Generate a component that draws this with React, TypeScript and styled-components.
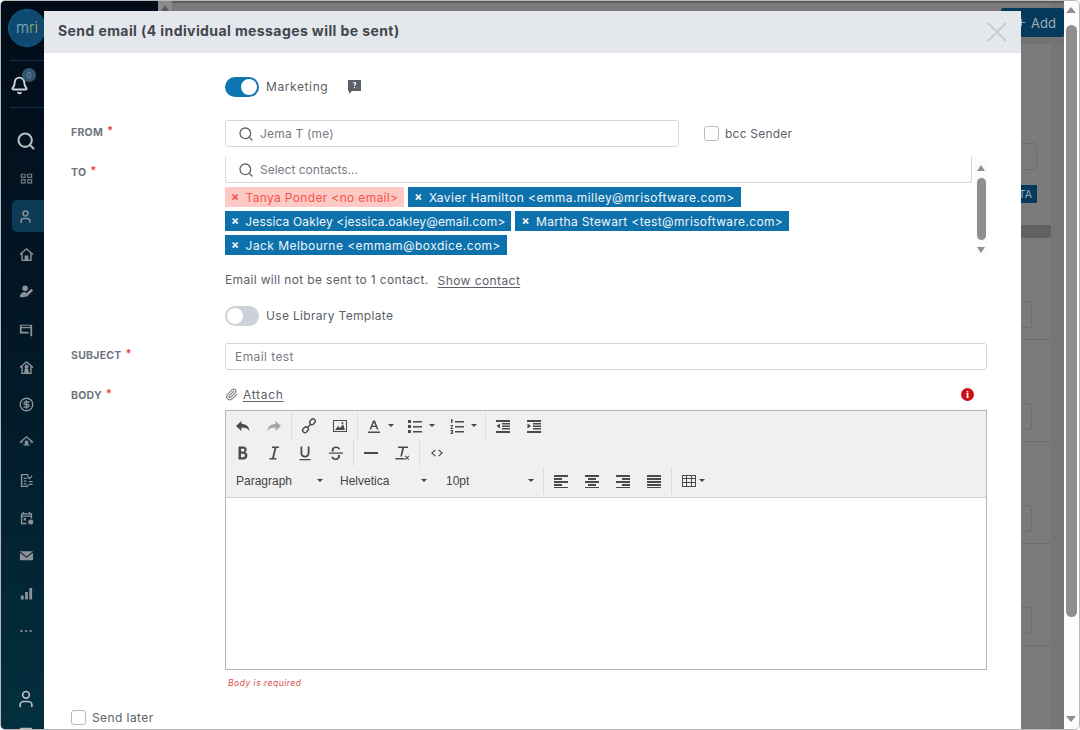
import React from 'react'
import styled, { createGlobalStyle } from 'styled-components'
import { Search, User, CircleDollarSign, Bell, Paperclip, Plus, Mail } from 'lucide-react'

const GlobalStyle = createGlobalStyle`
  html, body { margin: 0; padding: 0; height: 100%; overflow: hidden; background: #fff; }
  * { box-sizing: border-box; }
  body { font-family: Inter, "Noto Sans", sans-serif; }
`

const Page = styled.div`
  position: relative;
  width: 1080px;
  height: 730px;
  display: flex;
  overflow: hidden;
  border-radius: 5px;
  border: 1px solid #b8b8b8;
  background: #fdfdfd;
`

const Sidebar = styled.nav`
  width: 157px;
  flex: none;
  background: linear-gradient(180deg, #020c18 0%, #021a2a 55%, #03303f 100%);
`

const Rail = styled.div`
  width: 43px;
  height: 100%;
  display: flex;
  flex-direction: column;
  align-items: stretch;
`

const LogoWrap = styled.div`
  height: 60px;
  display: flex;
  align-items: center;
  padding-bottom: 6px;
  border-bottom: 1px solid #123044;
  margin-left: 9px;
`

const Logo = styled.div`
  width: 38px;
  height: 38px;
  flex: none;
  margin-left: -2px;
  border-radius: 50%;
  background: #0e4a70;
  border: 1px solid #0c6291;
  display: flex;
  align-items: center;
  justify-content: center;
  font-size: 15px;
  font-weight: 300;
  color: #8fb4c4;
  b { font-weight: 300; color: #8fae6a; }
  i { font-style: normal; color: #c9a94e; }
`

const BellRow = styled.div`
  position: relative;
  height: 47px;
  margin-left: 9px;
  display: flex;
  align-items: center;
  padding-top: 2px;
  color: #d3d6d8;
  border-bottom: 1px solid #123044;
`

const Badge = styled.span`
  position: absolute;
  top: 7px;
  left: 12px;
  width: 14px;
  height: 14px;
  border-radius: 50%;
  background: #35566f;
  color: #6f8ea6;
  font-size: 8px;
  display: flex;
  align-items: center;
  justify-content: center;
`

const NavList = styled.div`
  padding-top: 14px;
  display: flex;
  flex-direction: column;
  flex: 1;
  min-height: 0;
`

const NavItem = styled.div<{ $active?: boolean; $big?: boolean }>`
  height: ${p => (p.$active ? 32 : 37.7)}px;
  margin: ${p => (p.$active ? '3px 0 3px 11px' : '0')};
  padding: ${p => (p.$active ? '0 5px 0 0' : '0 0 0 7px')};
  display: flex;
  align-items: center;
  justify-content: center;
  color: ${p => (p.$big ? '#b9bec2' : '#8c9297')};
  background: ${p => (p.$active ? '#0c3a57' : 'transparent')};
  border-radius: ${p => (p.$active ? '5px 0 0 5px' : '0')};
`

const SidebarFoot = styled.div`
  height: 40px;
  flex: none;
  overflow: hidden;
  padding-left: 7px;
  display: flex;
  flex-direction: column;
  align-items: center;
  color: #b9bec2;
  gap: 17px;
  svg { flex: none; }
`

const SideScroll = styled.div`
  width: 14px;
  flex: none;
  display: flex;
  flex-direction: column;
  align-items: center;
  background: #8b8b8b;
  span { border-bottom-color: #5a5a5a; }
`

const Behind = styled.main`
  flex: 1;
  min-width: 0;
  display: flex;
  flex-direction: column;
  background: linear-gradient(to right, #7b7b7b calc(100% - 13px), #747778 0);
  border-top: 2px solid #5c5e5f;
  padding-top: 5px;
`

const BehindTop = styled.div`
  height: 36px;
  display: flex;
  justify-content: flex-end;
  border-bottom: 7px solid #717374;
`

const AddButton = styled.div`
  width: 63px;
  height: 29px;
  background: #053a5c;
  border-radius: 2px;
  color: #9db0bc;
  font-size: 13px;
  display: flex;
  align-items: center;
  justify-content: flex-end;
  gap: 4px;
  padding-right: 8px;
`

const BehindBody = styled.div`
  flex: 1;
  display: flex;
  flex-direction: column;
  align-items: flex-end;
  padding-top: 99px;
`

const GhostInput = styled.div`
  width: 60px;
  height: 27px;
  margin-right: 27px;
  border: 1px solid #6b6d6e;
  border-radius: 3px;
`

const GhostTag = styled.div`
  width: 60px;
  height: 18px;
  margin: 15px 27px 0 0;
  background: #053a5c;
  color: #9db0bc;
  font-size: 10.5px;
  display: flex;
  align-items: center;
  justify-content: flex-end;
  padding-right: 5px;
`

const GhostHead = styled.div`
  width: 60px;
  height: 13px;
  margin: 22px 13px 0 0;
  background: #5f6163;
`

const GhostRow = styled.div`
  width: 60px;
  height: 102px;
  margin-right: 13px;
  padding-top: 64px;
  border-bottom: 1px solid #6b6d6e;
`

const GhostRowInput = styled.div`
  width: 41px;
  height: 27px;
  margin-top: -1px;
  border: 1px solid #6b6d6e;
  border-radius: 3px;
`

const PageScroll = styled.div`
  width: 14px;
  flex: none;
  margin-right: 1px;
  background: #fdfdfd;
  display: flex;
  flex-direction: column;
  align-items: center;
`

const ScrollUp = styled.span<{ $w?: number; $top?: number }>`
  width: 0;
  height: 0;
  flex: none;
  margin-top: ${p => p.$top ?? 0}px;
  border-left: ${p => p.$w ?? 5}px solid transparent;
  border-right: ${p => p.$w ?? 5}px solid transparent;
  border-bottom: 6px solid #8f8f8f;
`

const ScrollDown = styled(ScrollUp)`
  border-bottom: 0;
  border-top: 6px solid #8f8f8f;
`

const PageThumb = styled.div`
  width: 11px;
  height: 592px;
  margin: 12px 0 99px;
  background: #8f8f8f;
  border-radius: 6px;
`

const Modal = styled.section`
  position: absolute;
  left: 43px;
  top: 10px;
  width: 977px;
  height: 760px;
  background: #fff;
`

const ModalHead = styled.header`
  height: 42px;
  background: #e4e7ec;
  display: flex;
  align-items: center;
  justify-content: space-between;
  padding: 0 14px;
`

const ModalTitle = styled.h2`
  margin: 0 0 3px;
  font-size: 14px;
  font-weight: 700;
  letter-spacing: 0.41px;
  color: #42464d;
`

const CloseIcon = styled.svg`
  width: 20px;
  height: 20px;
  stroke: #c9ccd0;
  stroke-width: 2;
  fill: none;
`

const Form = styled.div`
  padding: 24px 34px 0 27px;
  display: flex;
  flex-direction: column;
`

const Row = styled.div<{ $top?: number }>`
  display: flex;
  align-items: flex-start;
  margin-top: ${p => p.$top ?? 0}px;
`

const Label = styled.label<{ $pad?: number }>`
  width: 154px;
  flex: none;
  padding-top: ${p => p.$pad ?? 0}px;
  font-size: 10.5px;
  line-height: 14px;
  font-weight: 700;
  letter-spacing: 0.25px;
  color: #6e7480;
  sup {
    color: #f0413c;
    font-size: 11px;
    line-height: 0;
    margin-left: 4px;
    vertical-align: 2px;
  }
`

const Control = styled.div`
  flex: 1;
  min-width: 0;
  display: flex;
  align-items: center;
`

const ToggleTrack = styled.span<{ $on?: boolean }>`
  position: relative;
  width: 34px;
  height: 20px;
  flex: none;
  border-radius: 10px;
  background: ${p => (p.$on ? '#0d75b0' : '#cdd2da')};
`

const ToggleKnob = styled.span<{ $on?: boolean }>`
  position: absolute;
  top: 2px;
  left: ${p => (p.$on ? 16 : 2)}px;
  width: 16px;
  height: 16px;
  border-radius: 50%;
  background: #fff;
`

const BodyText = styled.span<{ $left?: number; $track?: number }>`
  font-size: 12px;
  letter-spacing: ${p => p.$track ?? 0.42}px;
  line-height: 16px;
  color: #5c6068;
  margin-left: ${p => p.$left ?? 0}px;
`

const HelpIcon = styled.svg`
  width: 13px;
  height: 14px;
  margin-left: 20px;
  fill: #5b6168;
`

const InputBox = styled.div<{ $width?: number; $open?: boolean; $pad?: number }>`
  width: ${p => (p.$width ? `${p.$width}px` : '100%')};
  height: ${p => (p.$open ? 26 : 27)}px;
  display: flex;
  align-items: center;
  gap: 6px;
  padding-left: ${p => p.$pad ?? 12}px;
  border: 1px solid #d3d6dc;
  border-top-width: ${p => (p.$open ? 0 : 1)}px;
  border-radius: ${p => (p.$open ? '0 0 3px 3px' : '3px')};
  color: #5f636a;
`

const Placeholder = styled.span<{ $track?: number }>`
  font-size: 12px;
  letter-spacing: ${p => p.$track ?? 0.42}px;
  color: #777b82;
`

const CheckBox = styled.span<{ $left?: number }>`
  width: 15px;
  height: 15px;
  flex: none;
  margin-left: ${p => p.$left ?? 0}px;
  border: 1px solid #b4bac6;
  border-radius: 3px;
  background: #fff;
`

const ToField = styled.div`
  flex: 1;
  display: flex;
  gap: 3px;
`

const ToMain = styled.div`
  width: 747px;
  flex: none;
`

const Chips = styled.div`
  display: flex;
  flex-wrap: wrap;
  gap: 4px;
  margin-top: 4px;
`

const Chip = styled.span<{ $bad?: boolean; $track?: number }>`
  height: 20px;
  display: inline-flex;
  align-items: center;
  padding: 0 6px;
  gap: 6px;
  font-size: 12px;
  letter-spacing: ${p => p.$track ?? 0.34}px;
  white-space: nowrap;
  background: ${p => (p.$bad ? '#fdc9c4' : '#0d71ab')};
  color: ${p => (p.$bad ? '#f8544a' : '#f1f6fa')};
`

const ChipX = styled.span`
  font-size: 12px;
  font-weight: 700;
  line-height: 1;
`

const ListScroll = styled.div`
  width: 12px;
  height: 95px;
  margin-top: 3px;
  display: flex;
  flex-direction: column;
  align-items: center;
  background: #fbfbfb;
`

const ListThumb = styled.div`
  width: 9px;
  height: 62px;
  margin: 7px 0;
  background: #8f8f8f;
  border-radius: 5px;
`

const ShowLink = styled.a<{ $left?: number; $track?: number }>`
  font-size: 12px;
  letter-spacing: ${p => p.$track ?? 0.42}px;
  color: #5c6068;
  margin-left: ${p => p.$left ?? 9}px;
  text-decoration: underline;
  text-underline-offset: 2px;
`

const AttachRow = styled.div`
  flex: 1;
  height: 16px;
  display: flex;
  align-items: center;
  color: #7b8087;
`

const ErrorDot = styled.span`
  margin-left: auto;
  margin-right: 13px;
  width: 13px;
  height: 13px;
  border-radius: 50%;
  background: #cc0f17;
  color: #fff;
  font-family: "Liberation Serif", serif;
  font-weight: 700;
  font-size: 11px;
  line-height: 13px;
  text-align: center;
`

const Editor = styled.div`
  flex: 1;
  height: 260px;
  border: 1px solid #b5b5b5;
  display: flex;
  flex-direction: column;
`

const Toolbar = styled.div`
  height: 87px;
  flex: none;
  padding: 1px 0 0 1px;
  background: #f0f0f0;
  border-bottom: 1px solid #d2d2d2;
  display: flex;
  flex-direction: column;
`

const ToolRow = styled.div`
  height: 27.5px;
  display: flex;
  align-items: center;
`

const ToolGroup = styled.div<{ $pad?: number }>`
  height: 26px;
  display: flex;
  align-items: center;
  padding-right: ${p => p.$pad ?? 2}px;
  margin-right: 1px;
  border-right: 1px solid #dcdcdc;
`

const ToolBtn = styled.span<{ $w?: number; $muted?: boolean }>`
  width: ${p => p.$w ?? 31}px;
  height: 24px;
  display: flex;
  align-items: center;
  justify-content: center;
  flex: none;
  color: ${p => (p.$muted ? '#a6a6a6' : '#4a4a4a')};
`

const SplitBtn = styled(ToolBtn)<{ $pad?: number }>`
  justify-content: flex-start;
  padding-left: ${p => p.$pad ?? 7}px;
  gap: 3px;
`

const Caret = styled.span<{ $left?: number }>`
  width: 0;
  height: 0;
  flex: none;
  margin-left: ${p => p.$left ?? 3}px;
  border-left: 3px solid transparent;
  border-right: 3px solid transparent;
  border-top: 3px solid #444;
`

const ListBox = styled.span<{ $w: number; $gap: number }>`
  width: ${p => p.$w}px;
  height: 24px;
  flex: none;
  display: flex;
  align-items: center;
  padding-left: 9px;
  font-family: "Liberation Sans", sans-serif;
  font-size: 12px;
  color: #444;
  span:first-child { width: ${p => p.$gap}px; }
`

const EditArea = styled.div`
  flex: 1;
  background: #fff;
`

const ErrorText = styled.em`
  display: block;
  padding-left: 3px;
  font-size: 8.5px;
  line-height: 12px;
  letter-spacing: 0.5px;
  color: #e0484b;
`

const Ico = styled.svg`
  width: 16px;
  height: 16px;
  fill: currentColor;
`

const Lines = ({ d }: { d: string }) => <Ico viewBox="0 0 16 16"><path d={d} /></Ico>

const alignPaths = {
  left: 'M1 2h14v2H1zM1 5h8v2H1zM1 8h14v2H1zM1 11h8v2H1zM1 14h14v1H1z',
  center: 'M1 2h14v2H1zM4 5h8v2H4zM1 8h14v2H1zM4 11h8v2H4zM1 14h14v1H1z',
  right: 'M1 2h14v2H1zM7 5h8v2H7zM1 8h14v2H1zM7 11h8v2H7zM1 14h14v1H1z',
  justify: 'M1 2h14v2H1zM1 5h14v2H1zM1 8h14v2H1zM1 11h14v2H1zM1 14h14v1H1z',
}

const Required = () => <sup>*</sup>

// sidebar glyphs that lucide has no close match for
const Glyph = ({ d, size = 15 }: { d: string; size?: number }) => (
  <svg width={size} height={size} viewBox="0 0 16 16" fill="currentColor" fillRule="evenodd"><path d={d} /></svg>
)

const grid = 'M1 2h6v5H1zM2.200 3.200v2.600h3.600V3.200zM9 2h6v5H9zM10.200 3.200v2.600h3.600V3.200zM1 9h6v5H1zM2.200 10.200v2.600h3.600v-2.600zM9 9h6v5H9zM10.200 10.200v2.600h3.600v-2.600z'
const house = 'M8 1 .5 7.500l1 1 1-.9V15h11V7.600l1 .9 1-1zM4 6.500 8 3l4 3.500v7H10V9H6v4.500H4z'
const houseUser = 'M8 1 .5 7.500l1 1 1-.9V15h11V7.600l1 .9 1-1zM4 6.500 8 3l4 3.500v7h-1.500L10 9.500 8.800 9a2 2 0 1 0-1.600 0L6 9.500l-.5 4H4z'
const houseRound = 'M8 1 .5 7.500l1 1 1-.9a6 6 0 0 0 11 0l1 .9 1-1zM8 3l4 3.500a4.400 4.400 0 0 1-1.200 5A3 3 0 0 0 9.600 9a2 2 0 1 0-3.200 0 3 3 0 0 0-1.200 2.500A4.400 4.400 0 0 1 4 6.500z'
const userPen = 'M6.500 1.500a3 3 0 1 1 0 6 3 3 0 0 1 0-6zM1 14c0-4 2.500-5.500 5.500-5.500L8 9.500 5.500 14zM13 5l2 2-6 6-3 1 1-3z'
const sign = 'M1 2h14v13h-2V6H3v4h8v2H1zM3 3.200v1.400h10V3.200z'
const listDoc = 'M2 1h8v5H9V2.500H3.500v11H9V12h1v3H2zM5 5h3v1.300H5zM5 8h3v1.300H5zM5 11h3v1.300H5zM10.500 4l1 1 2-2.500 1 .8-3 3.700-2-2zM10.500 8.500h4v1.300h-4zM10.500 11.500h4v1.300h-4z'
const calendar = 'M4 1h1.500v1.500h5V1H12v1.500h2V8h-1.500V6H3.500v6.500H8V14H2V2.500h2zM3.500 3.800v1h9v-1zM5 7.500h2.500V10H5zM12.500 9a2.700 2.700 0 1 1 0 5.400 2.700 2.700 0 0 1 0-5.400z'
const mail = 'M1 3.500h14L8 9zM1 5v8h14V5L8 10.500z'
const bars = 'M2 10h3v4.500H2zM6.500 6.500h3v8h-3zM11 2h3v12.500h-3z'

const App = () => {
  return (
    <>
      <GlobalStyle />
      <Page>
        <Sidebar>
          <Rail>
            <LogoWrap>
              <Logo>m<b>r</b><i>i</i></Logo>
            </LogoWrap>
            <BellRow>
              <Bell size={19} strokeWidth={2.4} />
              <Badge>0</Badge>
            </BellRow>
            <NavList>
              <NavItem $big><Search size={20} strokeWidth={2.5} /></NavItem>
              <NavItem><Glyph d={grid} size={13} /></NavItem>
              <NavItem $active><User size={15} strokeWidth={2.4} /></NavItem>
              <NavItem><Glyph d={house} /></NavItem>
              <NavItem><Glyph d={userPen} /></NavItem>
              <NavItem><Glyph d={sign} size={14} /></NavItem>
              <NavItem><Glyph d={houseUser} /></NavItem>
              <NavItem><CircleDollarSign size={15} strokeWidth={2.2} /></NavItem>
              <NavItem><Glyph d={houseRound} /></NavItem>
              <NavItem><Glyph d={listDoc} /></NavItem>
              <NavItem><Glyph d={calendar} /></NavItem>
              <NavItem><Glyph d={mail} /></NavItem>
              <NavItem><Glyph d={bars} /></NavItem>
              <NavItem>···</NavItem>
            </NavList>
            <SidebarFoot>
              <User size={20} />
              <Mail size={14} />
            </SidebarFoot>
          </Rail>
        </Sidebar>
        <SideScroll>
          <ScrollUp $w={4} $top={4} />
        </SideScroll>

        <Behind>
          <BehindTop>
            <AddButton><Plus size={11} />Add</AddButton>
          </BehindTop>
          <BehindBody>
            <GhostInput />
            <GhostTag>TA</GhostTag>
            <GhostHead />
            {[0, 1, 2, 3].map(i => (
              <GhostRow key={i}>
                <GhostRowInput />
              </GhostRow>
            ))}
          </BehindBody>
        </Behind>

        <PageScroll>
          <ScrollUp $top={6} />
          <PageThumb />
          <ScrollDown />
        </PageScroll>

        <Modal>
          <ModalHead>
            <ModalTitle>Send email (4 individual messages will be sent)</ModalTitle>
            <CloseIcon viewBox="0 0 20 20"><path d="M1 1l18 18M19 1L1 19" /></CloseIcon>
          </ModalHead>
          <Form>
            <Row>
              <Label />
              <Control>
                <ToggleTrack $on><ToggleKnob $on /></ToggleTrack>
                <BodyText $left={7} $track={0.6}>Marketing</BodyText>
                <HelpIcon viewBox="0 0 13 14"><path fillRule="evenodd" d="M0 0h13v11H4l-3 3v-3H0zM5 3.500C5 2.500 5.700 2 6.600 2 7.600 2 8.300 2.600 8.300 3.500c0 1.200-1.200 1.300-1.200 2.500H6c0-1.500 1.100-1.700 1.100-2.500 0-.8-1-.8-1 0zM6 7h1.100v1.200H6z" /></HelpIcon>
              </Control>
            </Row>

            <Row $top={23}>
              <Label $pad={6}>FROM<Required /></Label>
              <Control>
                <InputBox $width={454}>
                  <Search size={16} />
                  <Placeholder $track={0.2}>Jema T (me)</Placeholder>
                </InputBox>
                <CheckBox $left={25} />
                <BodyText $left={6} $track={0.22}>bcc Sender</BodyText>
              </Control>
            </Row>

            <Row $top={10}>
              <Label $pad={9}>TO<Required /></Label>
              <ToField>
                <ToMain>
                  <InputBox $open>
                    <Search size={16} />
                    <Placeholder $track={0}>Select contacts...</Placeholder>
                  </InputBox>
                  <Chips>
                    <Chip $bad><ChipX>×</ChipX>Tanya Ponder &lt;no email&gt;</Chip>
                    <Chip $track={0.43}><ChipX>×</ChipX>Xavier Hamilton &lt;emma.milley@mrisoftware.com&gt;</Chip>
                    <Chip $track={0.15}><ChipX>×</ChipX>Jessica Oakley &lt;jessica.oakley@email.com&gt;</Chip>
                    <Chip><ChipX>×</ChipX>Martha Stewart &lt;test@mrisoftware.com&gt;</Chip>
                    <Chip $track={0.44}><ChipX>×</ChipX>Jack Melbourne &lt;emmam@boxdice.com&gt;</Chip>
                  </Chips>
                </ToMain>
                <ListScroll>
                  <ScrollUp $w={4} $top={5} />
                  <ListThumb />
                  <ScrollDown $w={4} />
                </ListScroll>
              </ToField>
            </Row>

            <Row $top={17}>
              <Label />
              <Control>
                <BodyText $track={0.34}>Email will not be sent to 1 contact.</BodyText>
                <ShowLink>Show contact</ShowLink>
              </Control>
            </Row>

            <Row $top={18}>
              <Label />
              <Control>
                <ToggleTrack><ToggleKnob /></ToggleTrack>
                <BodyText $left={7} $track={0.32}>Use Library Template</BodyText>
              </Control>
            </Row>

            <Row $top={17}>
              <Label $pad={6}>SUBJECT<Required /></Label>
              <Control>
                <InputBox $pad={9}>
                  <Placeholder>Email test</Placeholder>
                </InputBox>
              </Control>
            </Row>

            <Row $top={16}>
              <Label $pad={3}>BODY<Required /></Label>
              <AttachRow>
                <Paperclip size={13} />
                <ShowLink $left={5} $track={0.7}>Attach</ShowLink>
                <ErrorDot>i</ErrorDot>
              </AttachRow>
            </Row>

            <Row $top={7}>
              <Label />
              <Editor>
                <Toolbar>
                  <ToolRow>
                    <ToolGroup>
                      <ToolBtn><Lines d="M6.500 3v3C11 6 14 8 14.500 13c-1.500-2.500-4-3.500-8-3.500V13L1 8z" /></ToolBtn>
                      <ToolBtn $muted><Lines d="M9.500 3v3C5 6 2 8 1.500 13c1.500-2.500 4-3.500 8-3.500V13L15 8z" /></ToolBtn>
                    </ToolGroup>
                    <ToolGroup>
                      <ToolBtn>
                        <svg width="16" height="16" viewBox="0 0 16 16" fill="none" stroke="currentColor" strokeWidth="1.400">
                          <rect x="8.500" y="1.500" width="6" height="4.500" rx="2.200" transform="rotate(-45 11.500 3.800)" />
                          <rect x="1.500" y="9.500" width="6" height="4.500" rx="2.200" transform="rotate(-45 4.500 11.800)" />
                          <path d="M6 10l4-4" />
                        </svg>
                      </ToolBtn>
                      <ToolBtn>
                        <Ico viewBox="0 0 16 16"><path fillRule="evenodd" d="M1 2h14v12H1zM2 3v10h12V3zM3 12l3-4 2 2 3-4 2 6zM10.500 4a1 1 0 1 1 0 2 1 1 0 0 1 0-2z" /></Ico>
                      </ToolBtn>
                    </ToolGroup>
                    <ToolGroup $pad={1}>
                      <SplitBtn $w={41}>
                        <Ico viewBox="0 0 16 16"><path fillRule="evenodd" d="M7 2.500h2l3.500 9h-1.600l-.9-2.500H6l-.9 2.500H3.500zM8 4.500 6.500 7.800h3zM2 13.500h12V15H2z" /></Ico>
                        <Caret />
                      </SplitBtn>
                      <SplitBtn $w={42}>
                        <Ico viewBox="0 0 16 16"><path d="M1 2h3v3H1zM6 3h9v1.500H6zM1 7h3v3H1zM6 8h9v1.500H6zM1 12h3v3H1zM6 13h9v1.500H6z" /></Ico>
                        <Caret />
                      </SplitBtn>
                      <SplitBtn $w={42}>
                        <Ico viewBox="0 0 16 16"><path d="M2 1h1.500v4H2zM1.500 7h2.500v1L2.500 10H4v1H1.500v-1L3 8H1.500zM1.500 12H4v4H1.500v-1H3v-.500H2v-1h1V13H1.500zM6 3h9v1.500H6zM6 8h9v1.500H6zM6 13h9v1.500H6z" /></Ico>
                        <Caret />
                      </SplitBtn>
                    </ToolGroup>
                    <ToolBtn><Lines d="M1 2h14v2H1zM7 5h8v1.500H7zM7 7.500h8V9H7zM7 10h8v1.500H7zM1 13h14v2H1zM5 5.500v5L1.500 8z" /></ToolBtn>
                    <ToolBtn><Lines d="M1 2h14v2H1zM7 5h8v1.500H7zM7 7.500h8V9H7zM7 10h8v1.500H7zM1 13h14v2H1zM1.500 5.500v5L5 8z" /></ToolBtn>
                  </ToolRow>
                  <ToolRow>
                    <ToolGroup>
                      <ToolBtn><Lines d="M3.500 1.500h5c3.500 0 4.300 4.300 1.700 5.800 3.500 1 2.800 7.200-1.700 7.200h-5zM6 3.800v2.800h2.400c1.500 0 1.500-2.800 0-2.800zM6 8.800v3.400h2.500c1.800 0 1.800-3.400 0-3.400z" /></ToolBtn>
                      <ToolBtn><Lines d="M6 1.500h7v1.500h-2.600L8 13h2.400v1.500H3.500V13h2.600L8.500 3H6z" /></ToolBtn>
                      <ToolBtn><Lines d="M3.500 1.500h1.800V8c0 3.700 5.400 3.700 5.400 0V1.500h1.800V8c0 6-9 6-9 0zM2.500 14h11v1.300h-11z" /></ToolBtn>
                      <ToolBtn><Lines d="M1 7.500h14v1.300H1zM3.800 6.500C3 3 5.500 1.500 8 1.500c2 0 3.500.8 4.200 2.500l-1.600.5C10 3.500 9 3.100 8 3.100c-2 0-3 1.900-2 3.400zM12 10c.5 3.500-2 5-4.200 5-2.300 0-4-1-4.500-3l1.600-.4c.3 1.200 1.700 1.800 2.900 1.800 1.700 0 2.700-1.600 2.100-3.400z" /></ToolBtn>
                    </ToolGroup>
                    <ToolGroup>
                      <ToolBtn><Lines d="M1 7h14v2H1z" /></ToolBtn>
                      <ToolBtn><Lines d="M4 1.500h10V3h-4L8 11.500H6.300L8.200 3H4zM1.500 13h9v1.500h-9zM11.500 10.500l1.500 1.500 1.500-1.500.7.700-1.500 1.500 1.500 1.500-.7.700-1.500-1.500-1.500 1.500-.7-.7 1.500-1.500-1.500-1.500z" /></ToolBtn>
                    </ToolGroup>
                    <ToolBtn><Lines d="M6 4.500l.8.8L3.800 8l3 2.700-.8.800L2 8zM10 4.500l-.8.8 3 2.700-3 2.700.8.800L14 8z" /></ToolBtn>
                  </ToolRow>
                  <ToolRow>
                    <ListBox $w={104} $gap={78}><span>Paragraph</span><Caret /></ListBox>
                    <ListBox $w={106} $gap={78}><span>Helvetica</span><Caret /></ListBox>
                    <ToolGroup $pad={1}>
                      <ListBox $w={105} $gap={79}><span>10pt</span><Caret /></ListBox>
                    </ToolGroup>
                    <ToolGroup>
                      <ToolBtn><Lines d={alignPaths.left} /></ToolBtn>
                      <ToolBtn><Lines d={alignPaths.center} /></ToolBtn>
                      <ToolBtn><Lines d={alignPaths.right} /></ToolBtn>
                      <ToolBtn><Lines d={alignPaths.justify} /></ToolBtn>
                    </ToolGroup>
                    <SplitBtn $w={40} $pad={8}>
                      <Ico viewBox="0 0 16 16"><path fillRule="evenodd" d="M1 2h14v12H1zM2 3v2h3V3zM6 3v2h4V3zM11 3v2h3V3zM2 6v3h3V6zM6 6v3h4V6zM11 6v3h3V6zM2 10v3h3v-3zM6 10v3h4v-3zM11 10v3h3v-3z" /></Ico>
                      <Caret $left={-1} />
                    </SplitBtn>
                  </ToolRow>
                </Toolbar>
                <EditArea />
              </Editor>
            </Row>

            <Row $top={7}>
              <Label />
              <ErrorText>Body is required</ErrorText>
            </Row>

            <Row $top={21}>
              <CheckBox />
              <BodyText $left={6}>Send later</BodyText>
            </Row>
          </Form>
        </Modal>
      </Page>
    </>
  )
}

export default App
